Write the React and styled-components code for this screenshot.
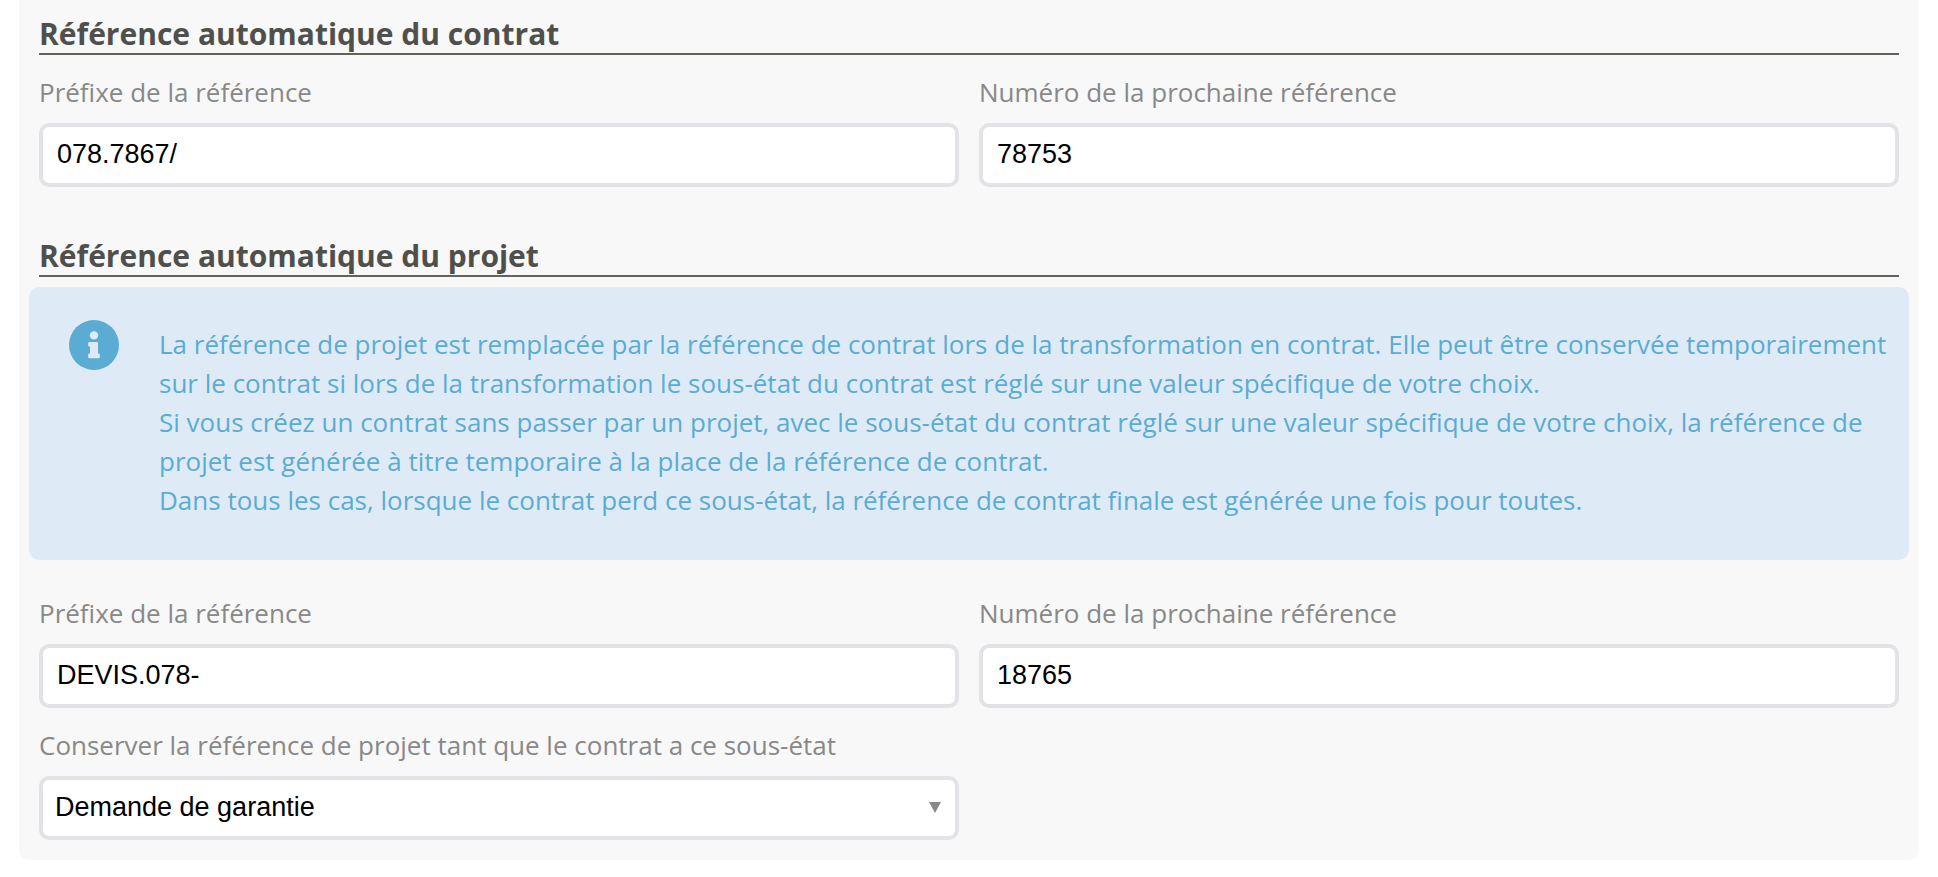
import { useState } from 'react'
import styled, { createGlobalStyle } from 'styled-components'


export default function App() {
    const [values, setValues] = useState({
        contractPrefix: '078.7867/',
        contractNumber: '78753',
        projectPrefix: 'DEVIS.078-',
        projectNumber: '18765',
        subState: 'Demande de garantie'
    })

    function handleChange(e) {
        setValues({ ...values, [e.target.name]: e.target.value })
    }

    return (
        <>
            <GlobalStyle />
            <Panel>
                <Section>
                    <Title>Référence automatique du contrat</Title>
                    <Fields>
                        <TextField
                            label='Préfixe de la référence'
                            name='contractPrefix'
                            value={values.contractPrefix}
                            onChange={handleChange}
                        />
                        <TextField
                            label='Numéro de la prochaine référence'
                            name='contractNumber'
                            value={values.contractNumber}
                            onChange={handleChange}
                        />
                    </Fields>
                </Section>
                <Section>
                    <Title>Référence automatique du projet</Title>
                    <InfoBanner />
                    <Fields>
                        <TextField
                            label='Préfixe de la référence'
                            name='projectPrefix'
                            value={values.projectPrefix}
                            onChange={handleChange}
                        />
                        <TextField
                            label='Numéro de la prochaine référence'
                            name='projectNumber'
                            value={values.projectNumber}
                            onChange={handleChange}
                        />
                        <Field>
                            <Label htmlFor='subState'>Conserver la référence de projet tant que le contrat a ce sous-état</Label>
                            <SelectBox>
                                <Select id='subState' name='subState' value={values.subState} onChange={handleChange}>
                                    <option>Demande de garantie</option>
                                </Select>
                                <Arrow viewBox='0 0 12 11' aria-hidden='true'>
                                    <path d='M0 0H12L6 11Z' />
                                </Arrow>
                            </SelectBox>
                        </Field>
                    </Fields>
                </Section>
            </Panel>
        </>
    )
}

function TextField({ label, name, value, onChange }) {
    return (
        <Field>
            <Label htmlFor={name}>{label}</Label>
            <Input id={name} name={name} type='text' value={value} onChange={onChange} />
        </Field>
    )
}

function InfoBanner() {
    return (
        <Banner>
            <InfoIcon viewBox='0 0 50 50' aria-hidden='true'>
                <circle cx='25' cy='25' r='25' />
                <circle className='mark' cx='25' cy='15.4' r='4.2' />
                <path
                    className='mark'
                    d='M20.4 21.9H27.8Q29 21.9 29 23.1V33.6H29.6Q30.8 33.6 30.8 34.8V37Q30.8 38.2 29.6 38.2H20.4Q19.2 38.2 19.2 37V34.8Q19.2 33.6 20.4 33.6H21V26.6H20.4Q19.2 26.6 19.2 25.4V23.1Q19.2 21.9 20.4 21.9Z'
                />
            </InfoIcon>
            <div>
                <p>La référence de projet est remplacée par la référence de contrat lors de la transformation en contrat. Elle peut être conservée temporairement sur le contrat si lors de la transformation le sous-état du contrat est réglé sur une valeur spécifique de votre choix.</p>
                <p>Si vous créez un contrat sans passer par un projet, avec le sous-état du contrat réglé sur une valeur spécifique de votre choix, la référence de projet est générée à titre temporaire à la place de la référence de contrat.</p>
                <p>Dans tous les cas, lorsque le contrat perd ce sous-état, la référence de contrat finale est générée une fois pour toutes.</p>
            </div>
        </Banner>
    )
}

const GlobalStyle = createGlobalStyle`
    * {
        box-sizing: border-box;
    }

    body {
        margin: 0;
        background-color: #fff;
        font-family: 'Open Sans', sans-serif;
    }
`
const Panel = styled.main`
    margin: 0 19px;
    padding: 14px 20px 20px;
    background-color: #f8f8f8;
    border-radius: 0 0 10px 10px;
`
const Section = styled.section`
    & + & {
        margin-top: 49px;
    }
`
const Title = styled.h2`
    margin: 0;
    border-bottom: 2px solid #62645c;
    font-weight: 700;
    font-size: 30px;
    line-height: 39px;
    color: #4f504b;
`
const Fields = styled.div`
    display: grid;
    grid-template-columns: 1fr 1fr;
    column-gap: 20px;
`
const Field = styled.div`
    display: flex;
    flex-direction: column;
`
const Label = styled.label`
    padding: 18px 0 11px;
    font-size: 26px;
    line-height: 39px;
    color: #888;
`
const Input = styled.input`
    width: 100%;
    height: 64px;
    padding: 0 14px 2px;
    border: 4px solid #e2e3e7;
    border-radius: 10px;
    background-color: #fff;
    font-family: 'Liberation Sans', Arial, sans-serif;
    font-size: 27px;
    color: #000;
`
const SelectBox = styled.div`
    position: relative;
`
const Select = styled(Input).attrs({ as: 'select' })`
    display: block;
    padding: 0 40px 2px 12px;
    appearance: none;
`
const Arrow = styled.svg`
    position: absolute;
    top: 26px;
    right: 18px;
    width: 12px;
    height: 11px;
    fill: #888;
    pointer-events: none;
`
const Banner = styled.div`
    display: flex;
    align-items: flex-start;
    gap: 40px;
    margin: 10px -10px 16px;
    padding: 38px 20px 40px 40px;
    border-radius: 10px;
    background-color: #deebf6;
    font-size: 26px;
    line-height: 39px;
    color: #5bacd2;

    p {
        margin: 0;
    }
`
const InfoIcon = styled.svg`
    flex: none;
    width: 50px;
    height: 50px;
    margin-top: -5px;
    fill: #5bacd2;

    .mark {
        fill: #deebf6;
    }
`
